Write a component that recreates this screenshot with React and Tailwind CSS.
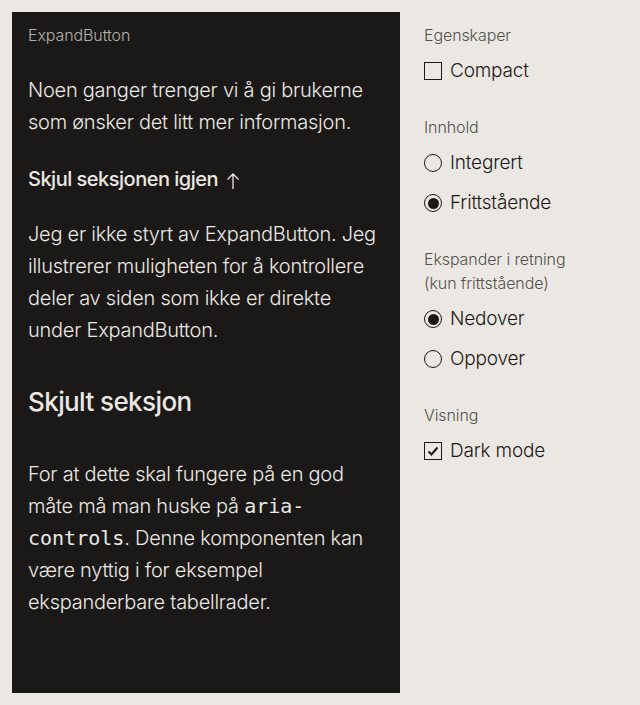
import React from "react";

const font = { fontFamily: "Inter, 'Liberation Sans', sans-serif" };

function Checkbox({ checked, label }) {
  return (
    <div className="flex h-10 items-center gap-2">
      <span className="flex h-[18px] w-[18px] items-center justify-center border-[1.5px] border-[#1b1918]">
        {checked && (
          <svg width="12" height="12" viewBox="0 0 12 12" fill="none">
            <path d="M1.5 6.5 L4.5 9.5 L10.5 2.5" stroke="#1b1918" strokeWidth="2" />
          </svg>
        )}
      </span>
      <span className="text-[19px] font-light tracking-[-0.2px] text-[#1b1918]">{label}</span>
    </div>
  );
}

function Radio({ checked, label }) {
  return (
    <div className="flex h-10 items-center gap-2">
      <span className="flex h-[18px] w-[18px] items-center justify-center rounded-full border-[1.5px] border-[#1b1918]">
        {checked && <span className="h-[11px] w-[11px] rounded-full bg-[#1b1918]" />}
      </span>
      <span className="text-[19px] font-light tracking-[-0.2px] text-[#1b1918]">{label}</span>
    </div>
  );
}

function Legend({ children }) {
  return <div className="mb-1 text-[16px] font-light leading-6 tracking-[-0.1px] text-[#54514e]">{children}</div>;
}

export default function App() {
  return (
    <div style={font} className="flex h-[705px] w-[640px] gap-6 bg-[#ebe8e3] p-3">
      <div className="w-[388px] bg-[#1b1918] pl-4 pr-3 pt-[11px] text-[#ebe8e3]">
        <div className="text-[16px] font-light leading-6 tracking-[-0.1px] text-[#b3b0ab]">ExpandButton</div>
        <p className="mt-[27px] text-[20px] font-light leading-8 tracking-[-0.25px]">
          Noen ganger trenger vi å gi brukerne som ønsker det litt mer informasjon.
        </p>
        <button className="mt-[25px] flex h-8 items-center gap-2 text-[20px] font-medium tracking-[-0.5px] text-[#ebe8e3]">
          Skjul seksjonen igjen
          <svg width="14" height="18" viewBox="0 0 14 18" fill="none" className="mt-[3px]">
            <path d="M7 17 V2 M1.5 7.5 L7 2 L12.5 7.5" stroke="#ebe8e3" strokeWidth="1.3" />
          </svg>
        </button>
        <p className="mt-[23px] text-[20px] font-light leading-8 tracking-[-0.25px]">
          Jeg er ikke styrt av ExpandButton. Jeg illustrerer muligheten for å kontrollere deler av siden som ikke er direkte under ExpandButton.
        </p>
        <h2 className="mt-[38px] text-[26px] font-medium leading-9 tracking-[-0.6px]">Skjult seksjon</h2>
        <p className="mt-[38px] text-[20px] font-light leading-8 tracking-[-0.25px]">
          For at dette skal fungere på en god måte må man huske på{" "}
          <code
            className="text-[20px] font-normal leading-8 tracking-normal"
            style={{ fontFamily: "'DejaVu Sans Mono', 'Liberation Mono', monospace" }}
          >
            aria-controls
          </code>
          . Denne komponenten kan være nyttig i for eksempel ekspanderbare tabellrader.
        </p>
      </div>
      <div className="flex-1 pt-[11px]">
        <Legend>Egenskaper</Legend>
        <Checkbox label="Compact" />
        <div className="mt-6">
          <Legend>Innhold</Legend>
          <Radio label="Integrert" />
          <Radio label="Frittstående" checked />
        </div>
        <div className="mt-6">
          <Legend>
            Ekspander i retning
            <br />
            (kun frittstående)
          </Legend>
          <Radio label="Nedover" checked />
          <Radio label="Oppover" />
        </div>
        <div className="mt-6">
          <Legend>Visning</Legend>
          <Checkbox label="Dark mode" checked />
        </div>
      </div>
    </div>
  );
}
